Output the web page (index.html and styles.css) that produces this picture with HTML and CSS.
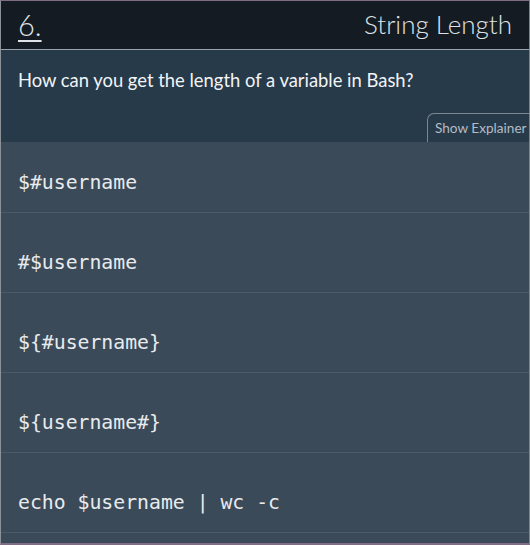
FILE: index.html
```html
<!DOCTYPE html>
<html>
<head>
<meta charset="utf-8">
<link rel="stylesheet" href="styles.css">
</head>
<body>
<div class="card">
  <header class="head">
    <span class="num">6.</span>
    <span class="title">String Length</span>
  </header>
  <section class="question">
    <p class="qtext">How can you get the length of a variable in Bash?</p>
    <div class="tab">Show Explainer</div>
  </section>
  <ul class="answers">
    <li class="answer">$#username</li>
    <li class="answer">#$username</li>
    <li class="answer">${#username}</li>
    <li class="answer">${username#}</li>
    <li class="answer">echo $username | wc -c</li>
  </ul>
</div>
</body>
</html>
```
FILE: styles.css
```css
* { box-sizing: border-box; }
html, body { margin: 0; padding: 0; background: #3a4a58; }
.card {
  height: 545px;
  display: flex;
  flex-direction: column;
  border-top: 1px solid #7f6d83;
  border-bottom: 2px solid #7f6d83;
  border-left: 1px solid #8b9197;
  border-right: 1px solid #7d858d;
  background: #3a4a58;
  font-family: "Lato", "Open Sans", sans-serif;
}
.head {
  height: 49px;
  flex: none;
  display: flex;
  align-items: center;
  justify-content: space-between;
  padding: 0 17px 2px 17px;
  background: #151b22;
  border-bottom: 1px solid #9aa3ad;
  color: #dfe3e7;
}
.num {
  font-size: 29px;
  font-weight: 300;
  text-decoration: underline;
  text-decoration-thickness: 2px;
  text-underline-offset: 4px;
}
.title {
  font-size: 26px;
  font-weight: 300;
}
.question {
  height: 92px;
  flex: none;
  display: flex;
  flex-direction: column;
  background: #273a49;
}
.qtext {
  margin: 0;
  padding: 19px 17px 0;
  font-size: 18.4px;
  line-height: 23px;
  color: #f2f4f6;
}
.tab {
  margin-top: auto;
  align-self: flex-end;
  width: 103px;
  height: 29px;
  margin-right: -1px;
  padding: 6px 0 0 7px;
  border: 1px solid #7b8792;
  border-bottom: none;
  border-right: none;
  border-radius: 7px 0 0 0;
  font-size: 13.6px;
  color: #b3bcc5;
  white-space: nowrap;
  overflow: hidden;
}
.answers {
  list-style: none;
  margin: 0;
  padding: 0;
  flex: 1;
}
.answer {
  height: 80px;
  padding: 29px 17px 0;
  border-bottom: 1px solid #4b5b68;
  font-family: "DejaVu Sans Mono", "Liberation Mono", monospace;
  font-size: 19.8px;
  line-height: 24px;
  color: #e8ebee;
  white-space: pre;
}
.answer:first-child {
  height: 71px;
  padding-top: 29px;
}
.answer + .answer { padding-top: 38px; }
```
